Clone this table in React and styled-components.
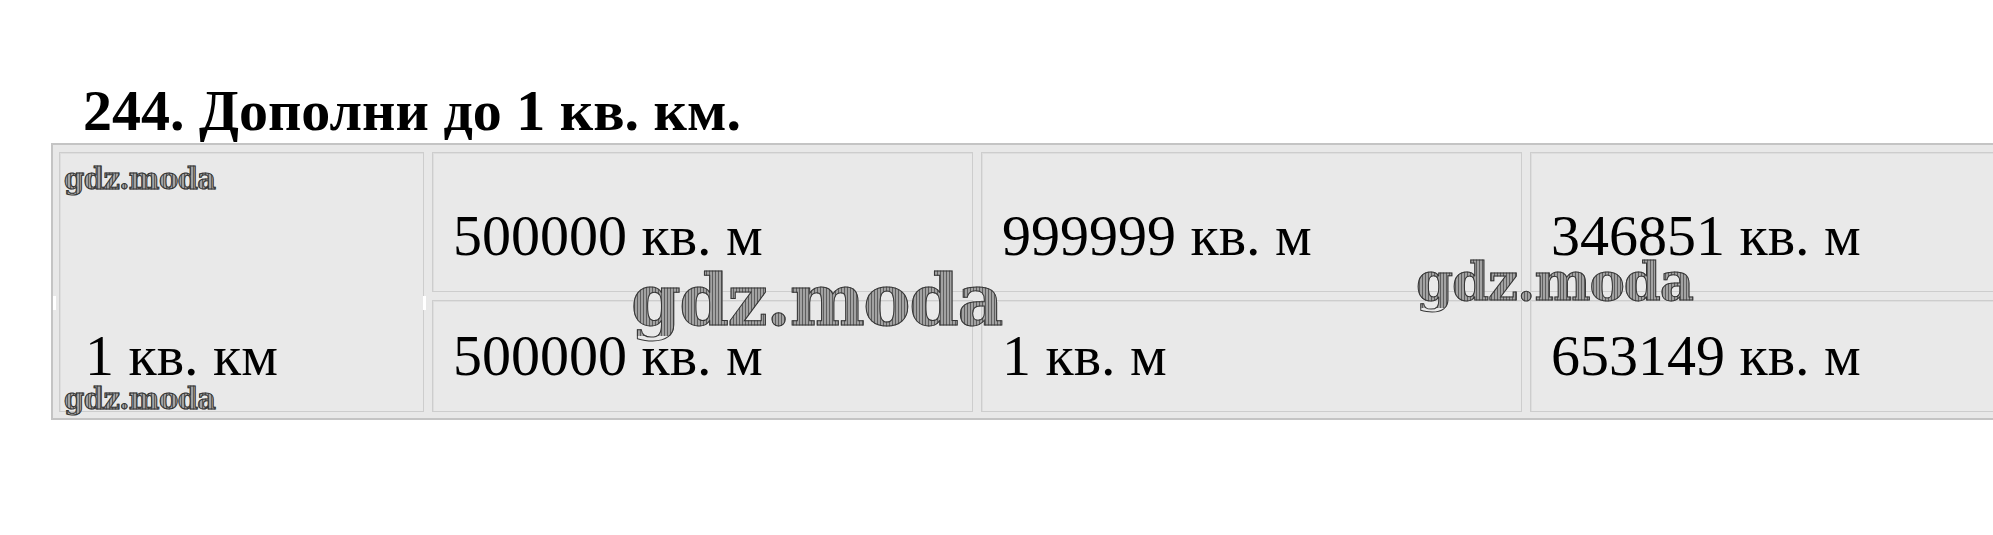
import React from "react";
import styled, { createGlobalStyle } from "styled-components";

const GlobalStyle = createGlobalStyle`
  html, body {
    margin: 0;
    padding: 0;
    background: #ffffff;
    overflow: hidden;
  }
`;

const Page = styled.div`
  position: relative;
  width: 1993px;
  height: 535px;
  padding: 82px 0 0 51px;
  box-sizing: border-box;
  overflow: hidden;
`;

const Title = styled.h1`
  margin: 0 0 3px 32px;
  font-family: "Liberation Serif", "Times New Roman", serif;
  font-weight: 700;
  font-size: 58px;
  line-height: 1;
  color: #000;
  white-space: nowrap;
`;

const Table = styled.div`
  position: relative;
  display: grid;
  grid-template-columns: 365px 541px 541px 541px;
  grid-template-rows: 140px 112px;
  gap: 8px;
  width: max-content;
  padding: 7px 6px 6px 6px;
  border: 2px solid #c4c4c4;
  background: #e8e8e8;

  /* small white nicks on the frame, as in the scan */
  &::before,
  &::after {
    content: "";
    position: absolute;
    top: 151px;
    width: 3px;
    height: 14px;
    background: #ffffff;
  }
  &::before { left: 0; }
  &::after { left: 370px; }
`;

const Cell = styled.div`
  display: flex;
  align-items: flex-end;
  grid-row: ${(p) => (p.$tall ? "span 2" : "auto")};
  padding: 0 0 26px ${(p) => (p.$tall ? 25 : 20)}px;
  border: 1px solid #cdcdcd;
  box-shadow: inset 1px 1px 0 #dedede;
  background: #e9e9e9;
  font-family: "Liberation Serif", "Times New Roman", serif;
  font-size: 58px;
  line-height: 1;
  color: #000;
  white-space: nowrap;
`;

const Mark = styled.span`
  position: absolute;
  left: ${(p) => p.$x}px;
  top: ${(p) => p.$y}px;
  font-family: "DejaVu Serif", "Liberation Serif", serif;
  font-weight: 700;
  font-size: ${(p) => p.$size}px;
  line-height: 1;
  letter-spacing: -0.02em;
  white-space: nowrap;
  color: transparent;
  background: repeating-linear-gradient(
    90deg,
    #5e5e5e 0 1px,
    #a2a2a2 1px 3px
  );
  -webkit-background-clip: text;
  background-clip: text;
  -webkit-text-stroke: 1px #363636;
  pointer-events: none;
`;

const rows = [
  ["500000 кв. м", "999999 кв. м", "346851 кв. м"],
  ["500000 кв. м", "1 кв. м", "653149 кв. м"],
];

export default function App() {
  return (
    <>
      <GlobalStyle />
      <Page>
        <Title>244. Дополни до 1 кв. км.</Title>
        <Table>
          <Cell $tall>1 кв. км</Cell>
          {rows[0].map((t, i) => (
            <Cell key={"a" + i}>{t}</Cell>
          ))}
          {rows[1].map((t, i) => (
            <Cell key={"b" + i}>{t}</Cell>
          ))}
        </Table>

        {/* watermarks lying over the table */}
        <Mark $x={64} $y={165} $size={29}>gdz.moda</Mark>
        <Mark $x={64} $y={385} $size={29}>gdz.moda</Mark>
        <Mark $x={631} $y={265} $size={71}>gdz.moda</Mark>
        <Mark $x={1416} $y={255} $size={53}>gdz.moda</Mark>
      </Page>
    </>
  );
}
